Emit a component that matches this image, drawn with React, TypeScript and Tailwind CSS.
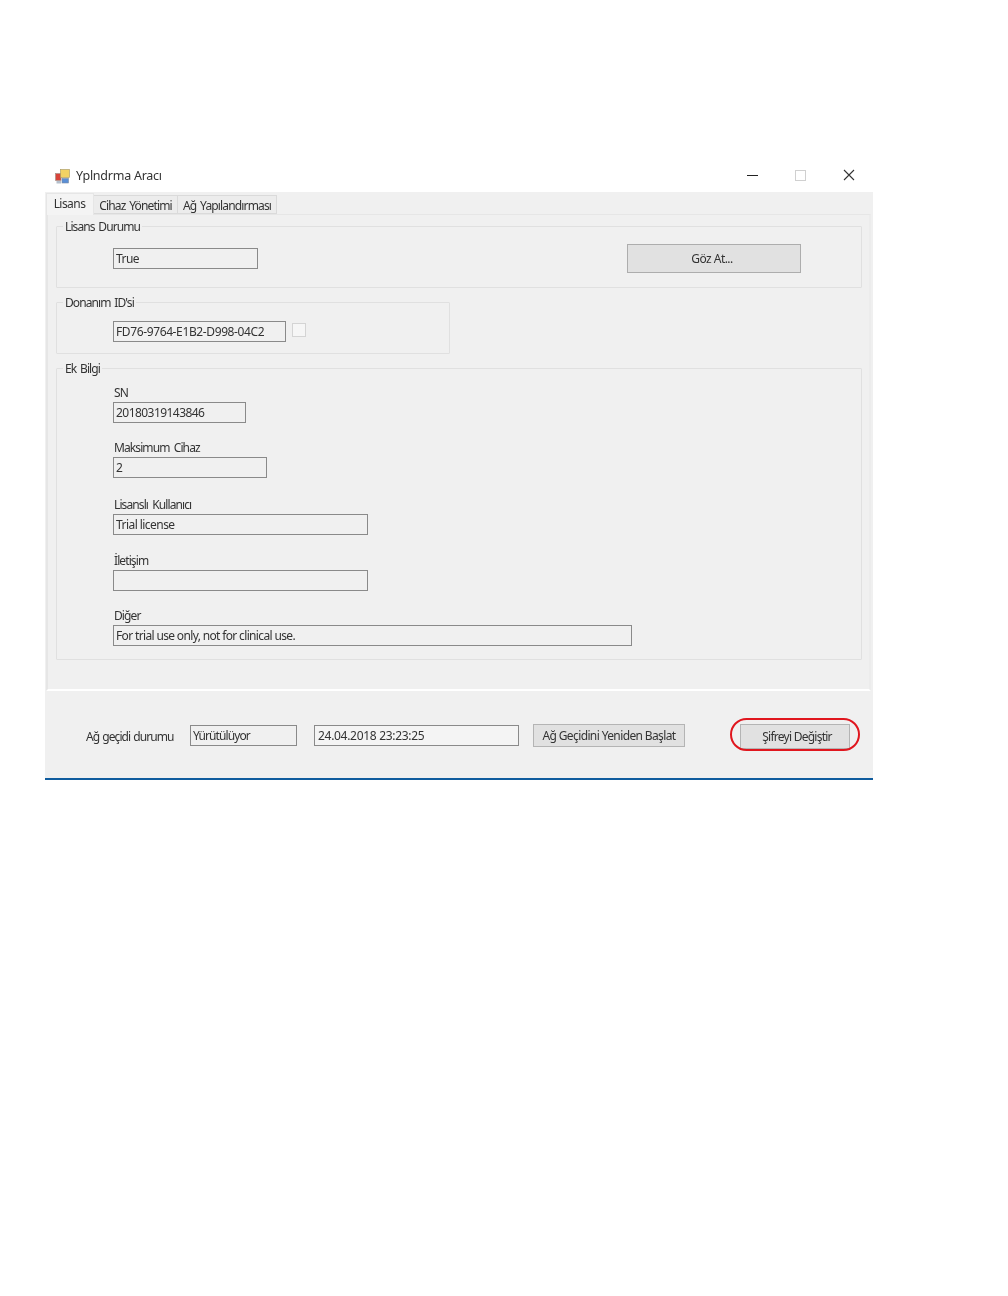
import { ReactNode } from 'react';

function ReadBox({ value, className }: { value?: string; className: string }) {
  return (
    <div className={`h-[21px] border border-[#8a8a8a] bg-[#f0f0f0] pl-[2px] text-[12px] leading-[20px] text-[#333] ${className}`}>
      {value}
    </div>
  );
}

function Group({ title, className, children }: { title: string; className: string; children: ReactNode }) {
  return (
    <fieldset className={`min-w-0 rounded-[1px] border border-[#e0e0e0] ${className}`}>
      <legend className="ml-[6px] px-[2px] pt-[2px] text-[12px] leading-[16px] tracking-[-0.9px] [word-spacing:1.5px] text-[#333]">{title}</legend>
      {children}
    </fieldset>
  );
}

function Field({ label, value, className, labelClass }: { label: string; value?: string; className: string; labelClass: string }) {
  return (
    <div className={labelClass}>
      <div className="h-[17px] pl-[1px] text-[12px] leading-[16px] tracking-[-0.9px] [word-spacing:2px] text-[#333]">{label}</div>
      <ReadBox value={value} className={className} />
    </div>
  );
}

function AppIcon() {
  return (
    <svg width="15" height="15" viewBox="0 0 15 15" className="shrink-0">
      <rect x="0.5" y="4.5" width="5.5" height="7" fill="#d8443a" stroke="#9b8f88" strokeWidth="0.6" />
      <rect x="5.5" y="0.5" width="9" height="8" fill="#f2d264" stroke="#a39560" strokeWidth="0.6" />
      <rect x="7" y="9.5" width="6.5" height="4.5" fill="#5a8fd6" stroke="#7b8aa0" strokeWidth="0.6" />
      <rect x="1.5" y="12" width="4.5" height="2.5" fill="#b4bfcc" />
    </svg>
  );
}

export default function App() {
  return (
    <div className="min-h-[1296px] bg-white pl-[45px] pt-[160px] font-['Noto_Sans','Liberation_Sans',sans-serif] tracking-[-0.55px] blur-[0.4px]">
      <div className="w-[828px]">
        {/* title bar */}
        <div className="flex h-[32px] items-center pl-[10px]">
          <AppIcon />
          <span className="ml-[6px] text-[12.5px] tracking-[-0.25px] text-[#333]">Yplndrma Aracı</span>
          <div className="ml-auto flex items-center gap-[37px] pr-[18px] pb-[2px]">
            <div className="h-px w-[11px] bg-[#222]" />
            <div className="h-[11px] w-[11px] border border-[#d0d0d0]" />
            <svg width="12" height="12" viewBox="0 0 12 12" className="text-[#333]">
              <path d="M1 1 L11 11 M11 1 L1 11" stroke="currentColor" strokeWidth="1.1" />
            </svg>
          </div>
        </div>

        <div className="bg-[#f0f0f0] pl-[1px] pr-[2px]">
          {/* tabs */}
          <div className="flex h-[22px] items-end text-[12px] text-[#333]">
            <div className="z-10 -mb-[1px] flex h-[22px] w-[48px] items-center justify-center border border-b-0 border-[#e6e6e6] bg-[#f4f4f4] pb-[2px] pr-[1px]">Lisans</div>
            <div className="flex h-[19px] w-[84px] items-center justify-center border-y border-r border-[#dadada] bg-[#ececec] pt-[2px] tracking-[-0.85px] [word-spacing:1.5px]">Cihaz Yönetimi</div>
            <div className="flex h-[19px] w-[99px] items-center justify-center border-y border-r border-[#dadada] bg-[#ececec] pt-[2px] tracking-[-0.85px] [word-spacing:1.5px]">Ağ Yapılandırması</div>
          </div>

          {/* tab panel */}
          <div className="h-[477px] border-[2px] border-t border-[#e6e6e6] border-b-white border-r-[#ececec] bg-[#f0f0f0] pl-[8px] pr-[8px] pt-[2px]">
            <Group title="Lisans Durumu" className="h-[71px] w-[806px]">
              <div className="flex items-start pl-[56px] pt-[13px]">
                <ReadBox value="True" className="w-[145px] tracking-[-0.55px]" />
                <button className="ml-[369px] -mt-[4px] h-[29px] w-[174px] border border-[#adadad] bg-[#e1e1e1] text-[12px] pr-[4px] text-[#333]">Göz At...</button>
              </div>
            </Group>

            <Group title="Donanım ID'si" className="mt-[5px] h-[61px] w-[394px]">
              <div className="flex items-center pl-[56px] pt-[10px]">
                <ReadBox value="FD76-9764-E1B2-D998-04C2" className="w-[173px] tracking-[-0.38px]" />
                <div className="ml-[6px] -mt-[3px] h-[14px] w-[14px] border border-[#d4d4d4] bg-[#f6f6f6]" />
              </div>
            </Group>

            <Group title="Ek Bilgi" className="mt-[5px] h-[301px] w-[806px]">
              <div className="pl-[56px] pt-[8px]">
                <Field label="SN" value="20180319143846" className="w-[133px] tracking-[-0.55px]" labelClass="" />
                <Field label="Maksimum Cihaz" value="2" className="w-[154px]" labelClass="mt-[17px]" />
                <Field label="Lisanslı Kullanıcı" value="Trial license" className="w-[255px] tracking-[-0.55px]" labelClass="mt-[19px]" />
                <Field label="İletişim" className="w-[255px]" labelClass="mt-[18px]" />
                <Field label="Diğer" value="For trial use only, not for clinical use." className="w-[519px] tracking-[-0.65px]" labelClass="mt-[17px]" />
              </div>
            </Group>
          </div>

          {/* status row */}
          <div className="flex h-[87px] items-start pt-[34px] text-[12px] text-[#333]">
            <span className="ml-[40px] mt-[1px] w-[104px] leading-[21px] tracking-[-0.95px] [word-spacing:1px]">Ağ geçidi durumu</span>
            <ReadBox value="Yürütülüyor" className="w-[107px] tracking-[-0.9px]" />
            <ReadBox value="24.04.2018 23:23:25" className="ml-[17px] w-[205px] bg-[#f4f4f4] pl-[3px] tracking-[-0.3px]" />
            <button className="ml-[14px] -mt-[1px] h-[23px] w-[152px] border border-[#b4b4b4] bg-[#e1e1e1] text-[12px] tracking-[-0.62px]">Ağ Geçidini Yeniden Başlat</button>
            <div className="relative ml-[55px] -mt-[1px] h-[25px] w-[110px]">
              <button className="h-full w-full border border-[#b4b4b4] bg-[#e1e1e1] pl-[4px] text-[12px] tracking-[-0.75px]">Şifreyi Değiştir</button>
              <div className="absolute -left-[10px] -right-[10px] -top-[6px] -bottom-[2px] rounded-[18px] border-[2px] border-[#e0161e]" />
            </div>
          </div>
        </div>
        <div className="h-[2px] bg-[#0f5c9e]" />
      </div>
    </div>
  );
}
